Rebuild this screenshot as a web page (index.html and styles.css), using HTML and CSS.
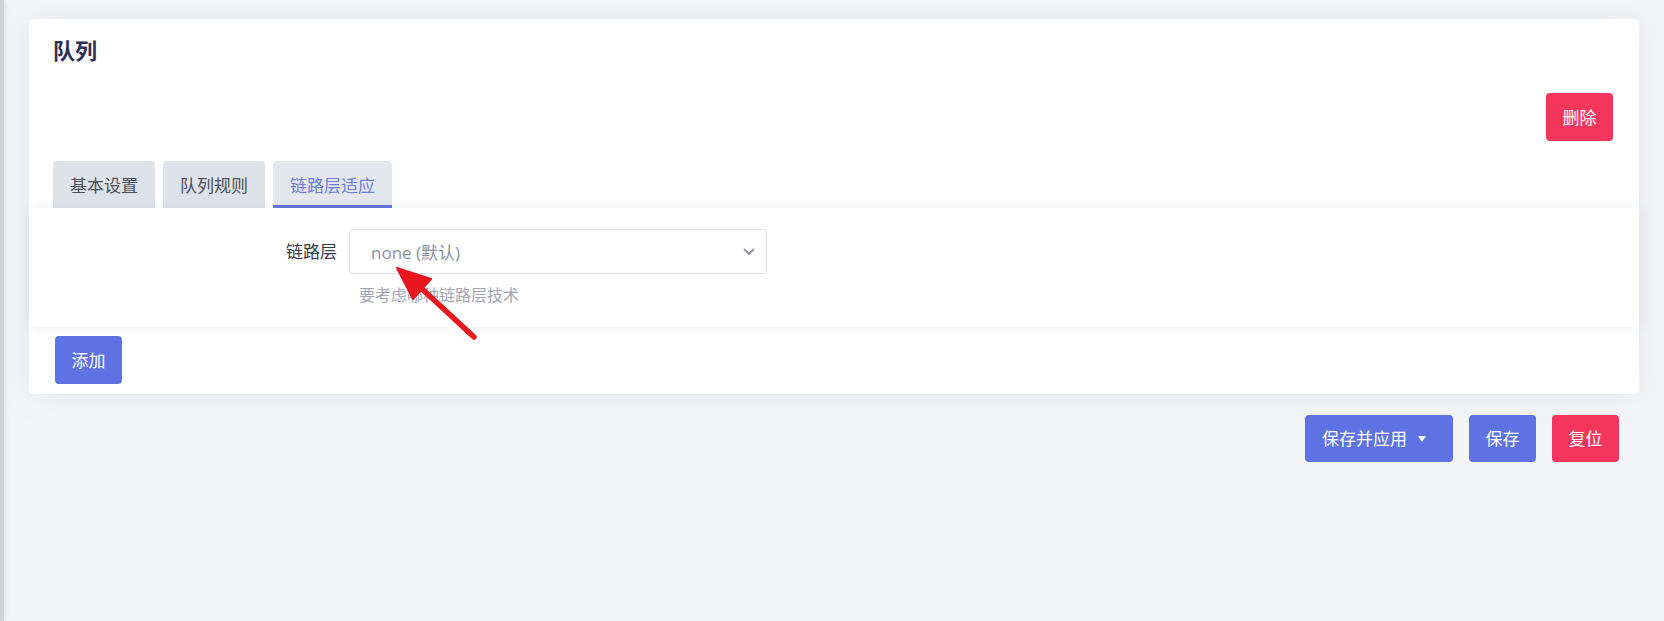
FILE: index.html
```html
<!DOCTYPE html>
<html lang="zh-CN">
<head>
<meta charset="utf-8">
<title>队列</title>
<link rel="stylesheet" href="styles.css">
</head>
<body>
<div class="layout">
  <div class="sidebar-edge"></div>
  <main class="main">
    <section class="card">
      <h2 class="card-title">队列</h2>
      <div class="card-actions">
        <button class="btn btn-danger" type="button">删除</button>
      </div>
      <ul class="tabs">
        <li class="tab">基本设置</li>
        <li class="tab">队列规则</li>
        <li class="tab tab-active">链路层适应</li>
      </ul>
      <div class="tab-panel">
        <div class="form-row">
          <label class="form-label">链路层</label>
          <div class="form-field">
            <div class="select">
              <span class="select-value">none (默认)</span>
              <svg class="select-chevron" width="12" height="8" viewBox="0 0 12 8"><path d="M1.5 1.5 L6 6 L10.5 1.5" fill="none" stroke="#8f95a3" stroke-width="1.8" stroke-linecap="round" stroke-linejoin="round"/></svg>
            </div>
            <div class="hint">要考虑哪种链路层技术</div>
          </div>
        </div>
      </div>
      <div class="card-footer">
        <button class="btn btn-primary" type="button">添加</button>
      </div>
    </section>
    <div class="page-actions">
      <button class="btn btn-primary btn-split" type="button">保存并应用<span class="caret"></span></button>
      <button class="btn btn-primary" type="button">保存</button>
      <button class="btn btn-danger" type="button">复位</button>
    </div>
  </main>
</div>
<svg class="annotation" width="1664" height="621" viewBox="0 0 1664 621">
  <line x1="474" y1="337" x2="421" y2="288" stroke="#e8161e" stroke-width="5.5" stroke-linecap="round"/>
  <polygon points="397,268 431,279 413,299" fill="#e8161e" stroke="#e8161e" stroke-width="2" stroke-linejoin="round"/>
</svg>
</body>
</html>
```

FILE: styles.css
```css
* {
  box-sizing: border-box;
}

html, body {
  margin: 0;
  padding: 0;
}

body {
  background: #f4f5f7;
  font-family: "Open Sans", "Noto Sans CJK SC", sans-serif;
  color: #3a3c4e;
  font-size: 17px;
  min-height: 100vh;
  position: relative;
}

.layout {
  display: flex;
  min-height: 100vh;
}

.sidebar-edge {
  width: 4px;
  flex: none;
  background: #d0d1d4;
  box-shadow: 2px 0 4px rgba(0, 0, 0, 0.08);
}

.main {
  flex: 1;
  padding: 19px 25px 0 25px;
}

.card {
  background: #fff;
  border-radius: 5px;
  box-shadow: 0 0 2rem 0 rgba(136, 152, 170, 0.15);
  padding-top: 19px;
}

.card-title {
  margin: 0;
  padding: 0 24px;
  font-size: 22px;
  line-height: 24px;
  font-weight: 700;
  color: #2e2f56;
}

.card-actions {
  display: flex;
  justify-content: flex-end;
  padding: 0 26px;
  margin-top: 31px;
}

.btn {
  border: none;
  border-radius: 4px;
  height: 48px;
  padding: 0 16.5px;
  font-family: "Open Sans", "Noto Sans CJK SC", sans-serif;
  font-size: 17px;
  color: #fff;
  line-height: 1;
  display: inline-flex;
  align-items: center;
  cursor: pointer;
}

.btn-danger {
  background: #f5365c;
}

.btn-primary {
  background: #5e72e4;
}

.tabs {
  list-style: none;
  margin: 20px 0 0 0;
  padding: 0 24px;
  display: flex;
  gap: 8px;
}

.tab {
  height: 47px;
  padding: 0 17px;
  background: #dee3ea;
  border-radius: 4px 4px 0 0;
  display: flex;
  align-items: center;
  color: #4b4f5c;
  font-size: 17px;
  border-bottom: 3px solid transparent;
  padding-top: 3px;
}

.tab-active {
  color: #6c7cdb;
  border-bottom-color: #5e72e4;
  background: #e4e8ee;
}

.tab-panel {
  background: #fff;
  box-shadow: 0 0 12px rgba(136, 152, 170, 0.16);
  padding: 21px 0 21px 0;
  position: relative;
}

.form-row {
  display: grid;
  grid-template-columns: 308px 418px;
  column-gap: 12px;
  align-items: start;
}

.form-label {
  text-align: right;
  height: 45px;
  line-height: 45px;
  font-size: 17px;
  color: #353849;
}

.select {
  height: 45px;
  border: 1px solid #dde0e6;
  border-radius: 4px;
  display: flex;
  align-items: center;
  justify-content: space-between;
  padding: 0 11px 0 21px;
  background: #fff;
}

.select-value {
  font-size: 17px;
  color: #8a8f9c;
}

.select-chevron {
  display: block;
}

.hint {
  margin-top: 10px;
  padding-left: 10px;
  font-size: 16px;
  line-height: 22px;
  color: #a2a6b2;
}

.card-footer {
  padding: 9px 26px 10px 26px;
}

.page-actions {
  display: flex;
  justify-content: flex-end;
  gap: 16px;
  margin-top: 21px;
  padding-right: 20px;
}

.page-actions .btn {
  height: 47px;
}

.btn-split {
  padding: 0 27px 0 17px;
}

.caret {
  display: inline-block;
  margin-left: 11px;
  width: 0;
  height: 0;
  border-left: 4.5px solid transparent;
  border-right: 4.5px solid transparent;
  border-top: 6px solid #fff;
}

.annotation {
  position: absolute;
  left: 0;
  top: 0;
  pointer-events: none;
}
```
